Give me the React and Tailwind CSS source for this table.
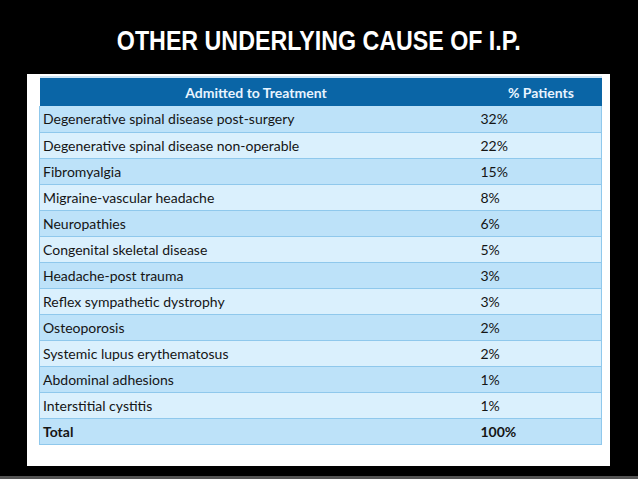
import React from 'react';

const rows = [
  ['Degenerative spinal disease post-surgery', '32%'],
  ['Degenerative spinal disease non-operable', '22%'],
  ['Fibromyalgia', '15%'],
  ['Migraine-vascular headache', '8%'],
  ['Neuropathies', '6%'],
  ['Congenital skeletal disease', '5%'],
  ['Headache-post trauma', '3%'],
  ['Reflex sympathetic dystrophy', '3%'],
  ['Osteoporosis', '2%'],
  ['Systemic lupus erythematosus', '2%'],
  ['Abdominal adhesions', '1%'],
  ['Interstitial cystitis', '1%'],
];

export default function App() {
  return (
    <div className="w-[638px] h-[479px] bg-black flex flex-col overflow-hidden">
      <div className="h-[74px] pt-[24px] flex justify-center">
        <h1 className="inline-block scale-x-[0.86] text-white font-bold text-[27px] leading-[34px] whitespace-nowrap font-['Liberation_Sans',sans-serif]">
          OTHER UNDERLYING CAUSE OF I.P.
        </h1>
      </div>
      <div className="ml-[27px] w-[583px] h-[392px] bg-white pt-[2px] px-[12px]">
        <table className="w-[563px] border-collapse text-[14px] text-[#151515] font-['Lato','Open_Sans',sans-serif] border-t-2 border-[#cfe6f7]">
          <thead>
            <tr className="h-[29px] bg-[#0a65a6] text-[#e8f4ff] font-bold">
              <th className="w-[433px] text-center font-bold">Admitted to Treatment</th>
              <th className="text-center font-bold pl-[8px]">% Patients</th>
            </tr>
          </thead>
          <tbody>
            {rows.map(([name, pct], i) => (
              <tr
                key={name}
                className={`h-[26px] border-b border-[#8fc8ec] ${i % 2 === 0 ? 'bg-[#bde2f9]' : 'bg-[#daf0fd]'}`}
              >
                <td className="pl-[3px] border-l border-[#8fc8ec]">{name}</td>
                <td className="pl-[8px] border-r border-[#8fc8ec]">{pct}</td>
              </tr>
            ))}
            <tr className="h-[26px] border-b border-[#8fc8ec] bg-[#bde2f9] font-bold">
              <td className="pl-[3px] border-l border-[#8fc8ec]">Total</td>
              <td className="pl-[8px] border-r border-[#8fc8ec]">100%</td>
            </tr>
          </tbody>
        </table>
      </div>
      <div className="mt-[10px] h-[3px] bg-[#555]" />
    </div>
  );
}
